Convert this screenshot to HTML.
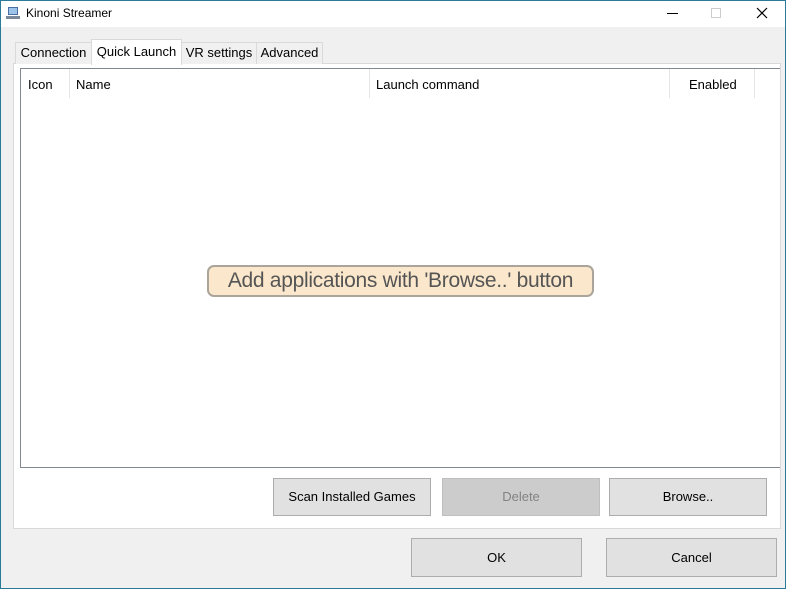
<!DOCTYPE html><html><head><style>
*{margin:0;padding:0;box-sizing:border-box}
body{width:786px;height:589px;background:#f0f0f0;font-family:"Liberation Sans",sans-serif;font-size:13px;color:#000;position:relative;overflow:hidden}
.a{position:absolute}
.btn{position:absolute;background:#e1e1e1;border:1px solid #adadad;text-align:center;font-size:13px}
.tab{position:absolute;background:#f0f0f0;border:1px solid #d9d9d9;border-bottom:none;text-align:center;font-size:13px;line-height:20px}
.sep{position:absolute;top:69px;width:1px;height:29px;background:#e5e5e5}
</style></head><body>
<div class="a" style="left:0;top:0;width:786px;height:27px;background:#fff"></div>
<div class="a" style="left:0;top:0;width:1px;height:589px;background:#2b7a99"></div>
<div class="a" style="right:0;top:0;width:1px;height:589px;background:#2b7a99"></div>
<div class="a" style="left:0;bottom:0;width:786px;height:1px;background:#2b7a99"></div>
<div class="a" style="left:0;top:0;width:786px;height:1px;background:#2b7a99"></div>
<svg class="a" style="left:5px;top:5px" width="16" height="16"><rect x="3" y="2" width="10" height="8" fill="#4a6fa5"/><rect x="4" y="3" width="8" height="6" fill="#9cc3e8"/><rect x="1" y="11" width="14" height="3" fill="#7a8a9a"/></svg>
<div class="a" style="left:26px;top:6px;font-size:12px">Kinoni Streamer</div>
<div class="a" style="left:667px;top:13px;width:11px;height:1px;background:#000"></div>
<div class="a" style="left:711px;top:8px;width:10px;height:10px;border:1px solid #ccc"></div>
<svg class="a" style="left:756px;top:7px" width="12" height="12"><path d="M1 1L11 11M11 1L1 11" stroke="#000" stroke-width="1.2"/></svg>
<div class="a" style="left:13px;top:63px;width:768px;height:466px;background:#fff;border:1px solid #d9d9d9"></div>
<div class="tab" style="left:15px;top:42px;width:77px;height:22px">Connection</div>
<div class="tab" style="left:181px;top:42px;width:76px;height:22px">VR settings</div>
<div class="tab" style="left:256px;top:42px;width:67px;height:22px">Advanced</div>
<div class="tab" style="left:91px;top:39px;width:91px;height:26px;background:#fff;line-height:24px">Quick Launch</div>
<div class="a" style="left:20px;top:68px;width:760px;height:400px;background:#fff;border:1px solid #828790;border-right:none"></div>
<div class="sep" style="left:69px"></div><div class="sep" style="left:369px"></div><div class="sep" style="left:669px"></div><div class="sep" style="left:754px"></div>
<div class="a" style="left:28px;top:77px">Icon</div>
<div class="a" style="left:76px;top:77px">Name</div>
<div class="a" style="left:376px;top:77px">Launch command</div>
<div class="a" style="left:689px;top:77px">Enabled</div>
<div class="a" style="left:207px;top:265px;width:387px;height:32px;background:#fbe8cc;border:2px solid #aaa49a;border-radius:7px;font-size:21px;color:#555;text-align:center;line-height:28px;letter-spacing:-0.3px">Add applications with 'Browse..' button</div>
<div class="btn" style="left:273px;top:478px;width:158px;height:38px;line-height:36px">Scan Installed Games</div>
<div class="btn" style="left:442px;top:478px;width:158px;height:38px;line-height:36px;background:#ccc;border-color:#bfbfbf;color:#838383">Delete</div>
<div class="btn" style="left:609px;top:478px;width:158px;height:38px;line-height:36px">Browse..</div>
<div class="btn" style="left:411px;top:538px;width:171px;height:39px;line-height:37px">OK</div>
<div class="btn" style="left:606px;top:538px;width:171px;height:39px;line-height:37px">Cancel</div>
</body></html>
